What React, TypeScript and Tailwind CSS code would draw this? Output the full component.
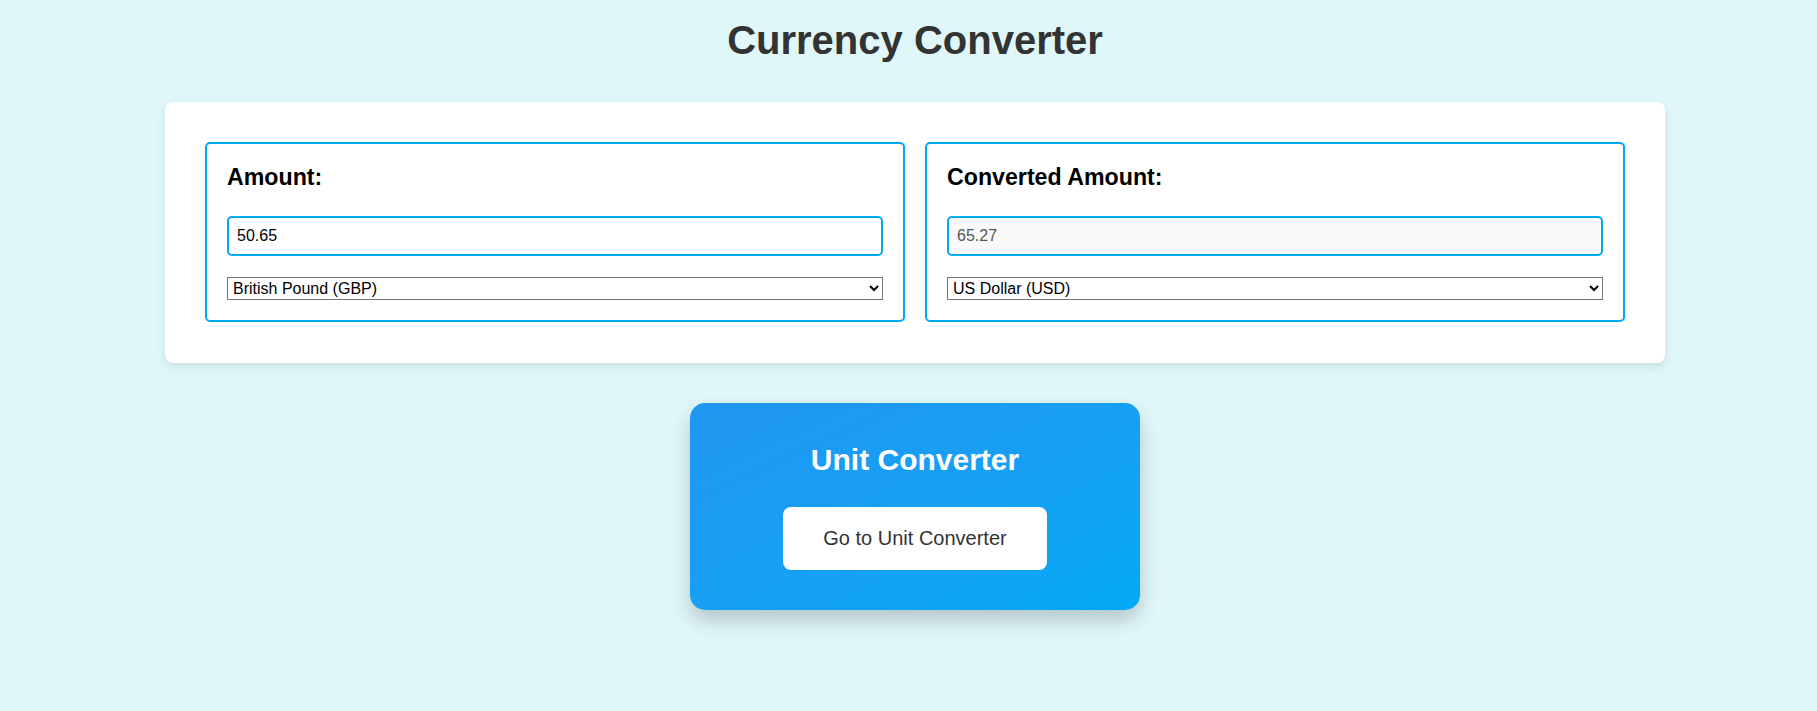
import React from "react";

function Box({ label, value, currency, readOnly }: { label: string; value: string; currency: string; readOnly?: boolean }) {
  return (
    <div className="border-2 border-[#03a9f4] rounded-[5px] p-[20px] flex flex-col">
      <label className="text-[23.2px] font-bold text-black leading-[27px] mb-[25px]">{label}</label>
      <input
        type="text"
        readOnly={readOnly}
        defaultValue={value}
        className={
          readOnly
            ? "h-[40px] border-2 border-[#03a9f4] rounded-[5px] px-[8px] text-[16px] bg-[#f9f9f9] text-[#555] outline-none"
            : "h-[40px] border-2 border-[#03a9f4] rounded-[5px] px-[8px] text-[16px] bg-white text-black outline-none"
        }
      />
      <select
        defaultValue={currency}
        className="mt-[21px] h-[23px] border border-[#767676] bg-white text-[16px] text-black pl-[1px] leading-[18px]"
      >
        <option value="USD">US Dollar (USD)</option>
        <option value="EUR">Euro (EUR)</option>
        <option value="GBP">British Pound (GBP)</option>
        <option value="JPY">Japanese Yen (JPY)</option>
      </select>
    </div>
  );
}

export default function App() {
  return (
    <div className="min-h-screen bg-[#e0f7fa] font-['Liberation_Sans',Arial,sans-serif] pl-[13px] pb-[80px]">
      <h1 className="pt-[17px] text-center text-[40px] leading-[46px] font-bold text-[#333]">Currency Converter</h1>
      <div className="mt-[39px] mx-auto w-[1500px] bg-white rounded-[8px] p-[40px] pb-[41px] shadow-[0_4px_10px_rgba(0,0,0,0.1)]">
        <div className="grid grid-cols-2 gap-[20px]">
          <Box label="Amount:" value="50.65" currency="GBP" />
          <Box label="Converted Amount:" value="65.27" currency="USD" readOnly />
        </div>
      </div>
      <div className="mt-[40px] mx-auto w-[450px] rounded-[15px] bg-gradient-to-br from-[#2196f3] to-[#03a9f4] pt-[40px] pb-[40px] flex flex-col items-center shadow-[0_10px_20px_rgba(0,0,0,0.2)]">
        <h2 className="text-[30px] leading-[34px] font-bold text-white">Unit Converter</h2>
        <button className="mt-[30px] bg-white rounded-[8px] px-[40px] py-[20px] text-[20px] leading-[23px] text-[#333]">
          Go to Unit Converter
        </button>
      </div>
    </div>
  );
}
